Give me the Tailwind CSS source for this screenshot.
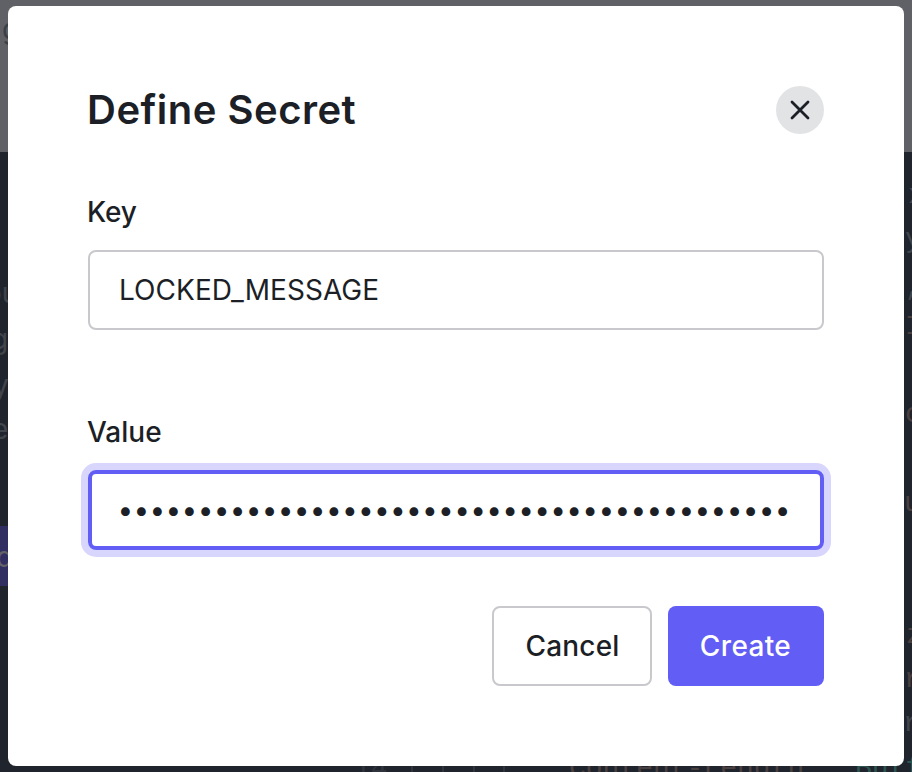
<!DOCTYPE html>
<html lang="en">
<head>
<meta charset="utf-8">
<title>Define Secret</title>
<script src="https://cdn.jsdelivr.net/npm/@tailwindcss/browser@4"></script>
</head>
<body class="relative w-[912px] h-[772px] overflow-hidden bg-[#20242d] font-['Inter','Liberation_Sans',sans-serif] text-[#1c1f26]">
  <!-- dimmed page behind the dialog -->
  <div class="absolute inset-0 overflow-hidden text-[28px] leading-none text-[#41454c]" aria-hidden="true">
    <div class="h-[152px] bg-[#606166]"></div>
    <div class="absolute left-0 top-[526px] h-[60px] w-2 bg-[#312e62]"></div>
    <span class="absolute left-[2px] top-[15px] text-[#3b4046]">g</span>
    <span class="absolute left-[-15px] top-[279px]">ou</span>
    <span class="absolute left-[-9px] top-[325px]">g</span>
    <span class="absolute left-[-7px] top-[371px]">y</span>
    <span class="absolute left-[-8px] top-[415px]">e</span>
    <span class="absolute left-[-4px] top-[543px] text-[#626268]">d</span>
    <div class="font-['Liberation_Mono',monospace]">
      <span class="absolute left-[908px] top-[182px]">x</span>
      <span class="absolute left-[905px] top-[226px]">y</span>
      <span class="absolute left-[905px] top-[274px]">,</span>
      <span class="absolute left-[905px] top-[313px] text-[#4b4040]">I</span>
      <span class="absolute left-[905px] top-[401px] text-[#4b4040]">c</span>
      <span class="absolute left-[904px] top-[490px] text-[#4b4040]">u</span>
      <span class="absolute left-[906px] top-[622px] text-[#4b4040]">z</span>
      <span class="absolute left-[904px] top-[666px] text-[#4b4040]">r</span>
      <span class="absolute left-[903px] top-[710px]">r</span>
      <span class="absolute left-[354px] top-[755px] text-[#30343d]">14</span>
      <span class="absolute left-[411px] top-[766px] h-2 w-[2px] bg-[#30343b]"></span>
      <span class="absolute left-[442px] top-[766px] h-2 w-[2px] bg-[#30343b]"></span>
      <span class="absolute left-[473px] top-[766px] h-2 w-[2px] bg-[#30343b]"></span>
      <span class="absolute left-[503px] top-[766px] h-2 w-[2px] bg-[#30343b]"></span>
      <span class="absolute left-[569px] top-[755px] whitespace-nowrap text-[#4b4040]">Content-Length</span>
      <span class="absolute left-[855px] top-[755px] whitespace-nowrap text-[#2b5551]">Buff</span>
    </div>
  </div>

  <main role="dialog" class="relative mx-2 mt-[6px] h-[760px] rounded-lg bg-white px-20 pt-20">
    <header class="flex h-12 items-center justify-between">
      <h1 class="-ml-px text-[40px] leading-[48px] font-semibold tracking-[0.5px]">Define Secret</h1>
      <button class="flex size-12 items-center justify-center rounded-full bg-[#e2e3e5]" aria-label="Close">
        <svg class="size-6" viewBox="0 0 24 24" fill="none" stroke="#1c1f26" stroke-width="2.8" stroke-linecap="round"><path d="M4 4 20 20M20 4 4 20"/></svg>
      </button>
    </header>
    <label class="mt-[58px] -ml-px block text-[28px] leading-10 font-medium tracking-[-0.1px]">Key</label>
    <div class="mt-[18px] flex h-20 items-center rounded-lg border-2 border-[#c8c8cd] px-[29px] text-[28px] tracking-[0.05px]">LOCKED_MESSAGE</div>
    <label class="mt-[82px] -ml-px block text-[28px] leading-10 font-medium">Value</label>
    <div class="mt-[18px] flex h-20 items-center overflow-visible rounded-lg border-4 border-[#625df5] pl-[25.5px] text-[28px] tracking-[0.28px] whitespace-nowrap ring-7 ring-[#d9d6fd]">••••••••••••••••••••••••••••••••••••••••••</div>
    <footer class="mt-14 flex justify-end gap-4 text-[28px] font-medium tracking-[0.35px]">
      <button class="h-20 w-40 rounded-lg border-2 border-[#c8c8cd] pl-px tracking-[0.2px]">Cancel</button>
      <button class="h-20 w-[156px] rounded-lg bg-[#625df5] pr-px text-white">Create</button>
    </footer>
  </main>
</body>
</html>
